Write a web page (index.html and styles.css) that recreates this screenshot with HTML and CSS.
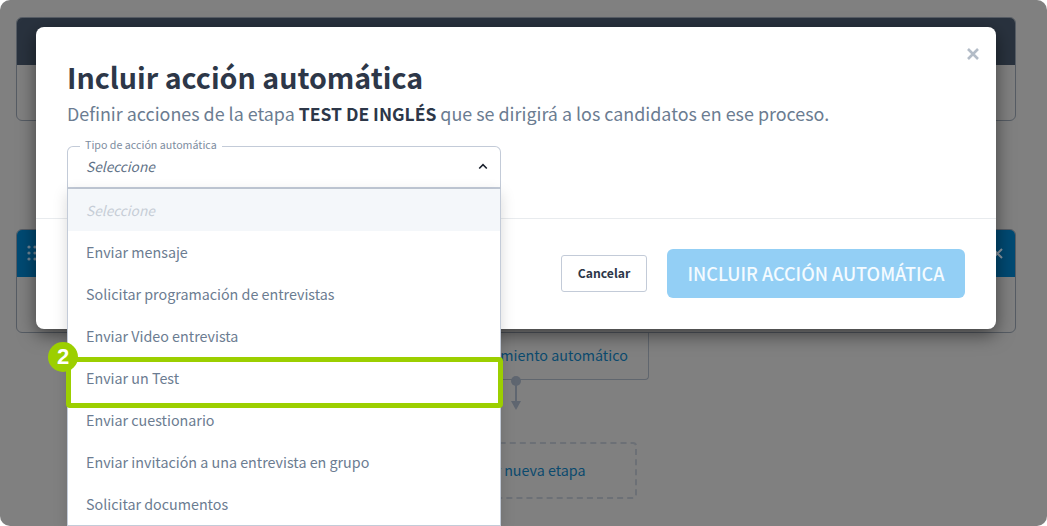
FILE: index.html

```html
<!DOCTYPE html>
<html lang="es">
<head>
  <meta charset="UTF-8" />
  <title>Incluir acción automática</title>
  <link rel="stylesheet" href="styles.css">
</head>
<body>
  <div class="board">
    <div class="stage">
      <div class="stage-head dark"></div>
    </div>
    <div class="stage stage-blue">
      <div class="stage-head blue">
        <svg class="grip" width="10" height="16" viewBox="0 0 10 16"><g fill="#6f8494"><circle cx="2" cy="2" r="1.6"/><circle cx="8" cy="2" r="1.6"/><circle cx="2" cy="8" r="1.6"/><circle cx="8" cy="8" r="1.6"/><circle cx="2" cy="14" r="1.6"/><circle cx="8" cy="14" r="1.6"/></g></svg>
        <svg class="stage-close" width="11" height="11" viewBox="0 0 11 11"><path d="M1 1l9 9M10 1l-9 9" stroke="#8d9aa5" stroke-width="2"/></svg>
      </div>
    </div>
    <div class="flow">
      <div class="auto-box"><a class="flow-link">Incluir procedimiento automático</a></div>
      <svg class="connector" width="16" height="36" viewBox="0 0 16 36"><circle cx="8" cy="6" r="5" fill="#5f6670"/><path d="M8 6v22" stroke="#5f6670" stroke-width="2"/><path d="M3 26h10l-5 9z" fill="#5f6670"/></svg>
      <div class="new-stage">
        <svg class="plus" width="8" height="8" viewBox="0 0 8 8"><path d="M4 0v8M0 4h8" stroke="#0b4a6e" stroke-width="2"/></svg>
        <a class="flow-link">Incluir nueva etapa</a>
      </div>
    </div>

    <div class="modal">
      <svg class="modal-close" width="12" height="12" viewBox="0 0 12 12"><path d="M1 1l10 10M11 1L1 11" stroke="#b3bcc7" stroke-width="2.6"/></svg>
      <div class="modal-body">
        <h1>Incluir acción automática</h1>
        <p class="lead">Definir acciones de la etapa <strong>TEST DE INGLÉS</strong> que se dirigirá a los candidatos en ese proceso.</p>
        <div class="select">
          <span class="select-label">Tipo de acción automática</span>
          <span class="select-value">Seleccione</span>
          <svg class="chevron" width="10" height="7" viewBox="0 0 10 7"><path d="M1.2 5.5l3.8-3.8 3.8 3.8" fill="none" stroke="#1a202c" stroke-width="1.6"/></svg>
          <ul class="options">
            <li class="placeholder">Seleccione</li>
            <li>Enviar mensaje</li>
            <li>Solicitar programación de entrevistas</li>
            <li>Enviar Video entrevista</li>
            <li>Enviar un Test</li>
            <li>Enviar cuestionario</li>
            <li>Enviar invitación a una entrevista en grupo</li>
            <li>Solicitar documentos</li>
          </ul>
          <div class="highlight"><span class="badge">2</span></div>
        </div>
      </div>
      <div class="modal-foot">
        <button class="btn-cancel">Cancelar</button>
        <button class="btn-main">INCLUIR ACCIÓN AUTOMÁTICA</button>
      </div>
    </div>
  </div>
</body>
</html>
```

FILE: styles.css

```css
* { margin: 0; padding: 0; box-sizing: border-box; }
html, body { height: 100%; background: #fff; overflow: hidden; }
body { font-family: "Noto Sans CJK SC", "Open Sans", sans-serif; color: #5f7287; }

.board {
  position: relative;
  height: 526px;
  padding: 17px 31px 0 16px;
  background: #808080;
  border-radius: 10px;
  overflow: hidden;
}

.stage {
  height: 104px;
  border: 1px solid #565c64;
  border-radius: 6px;
  overflow: hidden;
}
.stage-blue { margin-top: 108px; }
.stage-head { height: 48px; margin: -1px -1px 0; }
.stage-head.dark { background: #29323e; }
.stage-head.blue {
  display: flex;
  align-items: center;
  justify-content: space-between;
  padding: 0 13px 0 11px;
  background: #014a73;
}

.flow { display: flex; flex-direction: column; align-items: center; }
.auto-box {
  width: 266px;
  height: 47px;
  padding-bottom: 2px;
  display: flex;
  align-items: center;
  justify-content: center;
  border: 1px solid #60666e;
  border-top: 0;
  border-radius: 0 0 4px 4px;
}
.connector { margin-top: -5px; }
.new-stage {
  width: 242px;
  height: 57px;
  margin-top: 31px;
  padding-bottom: 2px;
  display: flex;
  align-items: center;
  justify-content: center;
  gap: 4px;
  border: 2px dashed #6c7076;
  border-radius: 4px;
}
.flow-link { font-size: 14.3px; line-height: 20px; color: #0b4a6e; white-space: nowrap; }

.modal {
  position: absolute;
  top: 27px;
  left: 36px;
  width: 960px;
  height: 302px;
  background: #fff;
  border-radius: 8px;
  box-shadow: 0 6px 18px rgba(0, 0, 0, 0.5);
}
.modal-close { position: absolute; top: 21px; right: 17px; }
.modal-body { height: 192px; padding: 31px 31px 0; border-bottom: 1px solid #e8ebee; }
h1 { font-size: 28.6px; line-height: 37px; font-weight: 700; color: #2d3748; }
.lead { margin-top: 5px; font-size: 17.9px; line-height: 26px; color: #6b7c91; }
.lead strong { font-size: 17.5px; font-weight: 700; color: #2d3748; }

.select {
  position: relative;
  width: 434px;
  height: 43px;
  margin-top: 19px;
  padding: 0 18px 2px;
  display: flex;
  align-items: center;
  justify-content: space-between;
  border: 1px solid #c3cbd8;
  border-bottom-width: 2px;
  border-radius: 6px 6px 0 0;
}
.select-label {
  position: absolute;
  top: -9px;
  left: 12px;
  padding: 0 5px;
  background: #fff;
  font-size: 10.7px;
  line-height: 14px;
  color: #7d8ca0;
}
.select-value { font-size: 13.7px; line-height: 22px; font-style: italic; color: #5f7287; }
.chevron { margin-right: -6px; }

.options {
  position: absolute;
  top: 42px;
  left: -1px;
  width: 434px;
  list-style: none;
  background: #fff;
  border: 1px solid #c3cbd8;
  border-top: 0;
  box-shadow: 0 4px 14px rgba(0, 0, 0, 0.15);
}
.options li {
  height: 42px;
  padding-left: 18px;
  font-size: 14.3px;
  line-height: 42px;
  color: #6b7c91;
}
.options .placeholder { background: #f4f7fa; font-size: 13.7px; font-style: italic; color: #c6cdd6; }

.highlight {
  position: absolute;
  top: 210px;
  left: -2px;
  width: 437px;
  height: 51px;
  border: 5px solid #9ccf00;
  border-radius: 4px;
}
.badge {
  position: absolute;
  top: -20px;
  left: -23px;
  width: 30px;
  height: 30px;
  border-radius: 50%;
  background: #9ccf00;
  font-family: "Liberation Sans", sans-serif;
  font-size: 22px;
  font-weight: 700;
  line-height: 30px;
  text-align: center;
  color: #fff;
}

.modal-foot {
  height: 109px;
  padding-right: 31px;
  display: flex;
  align-items: center;
  justify-content: flex-end;
  gap: 20px;
}
.btn-cancel {
  width: 86px;
  height: 37px;
  padding-bottom: 2px;
  font-family: inherit;
  font-size: 12.2px;
  font-weight: 700;
  color: #2d3748;
  background: #fff;
  border: 1px solid #c3cbd8;
  border-radius: 3px;
}
.btn-main {
  width: 298px;
  height: 49px;
  padding-bottom: 2px;
  font-family: inherit;
  font-size: 18px;
  font-weight: 500;
  color: #f4fbff;
  background: #93cff5;
  border: 0;
  border-radius: 6px;
}
```
